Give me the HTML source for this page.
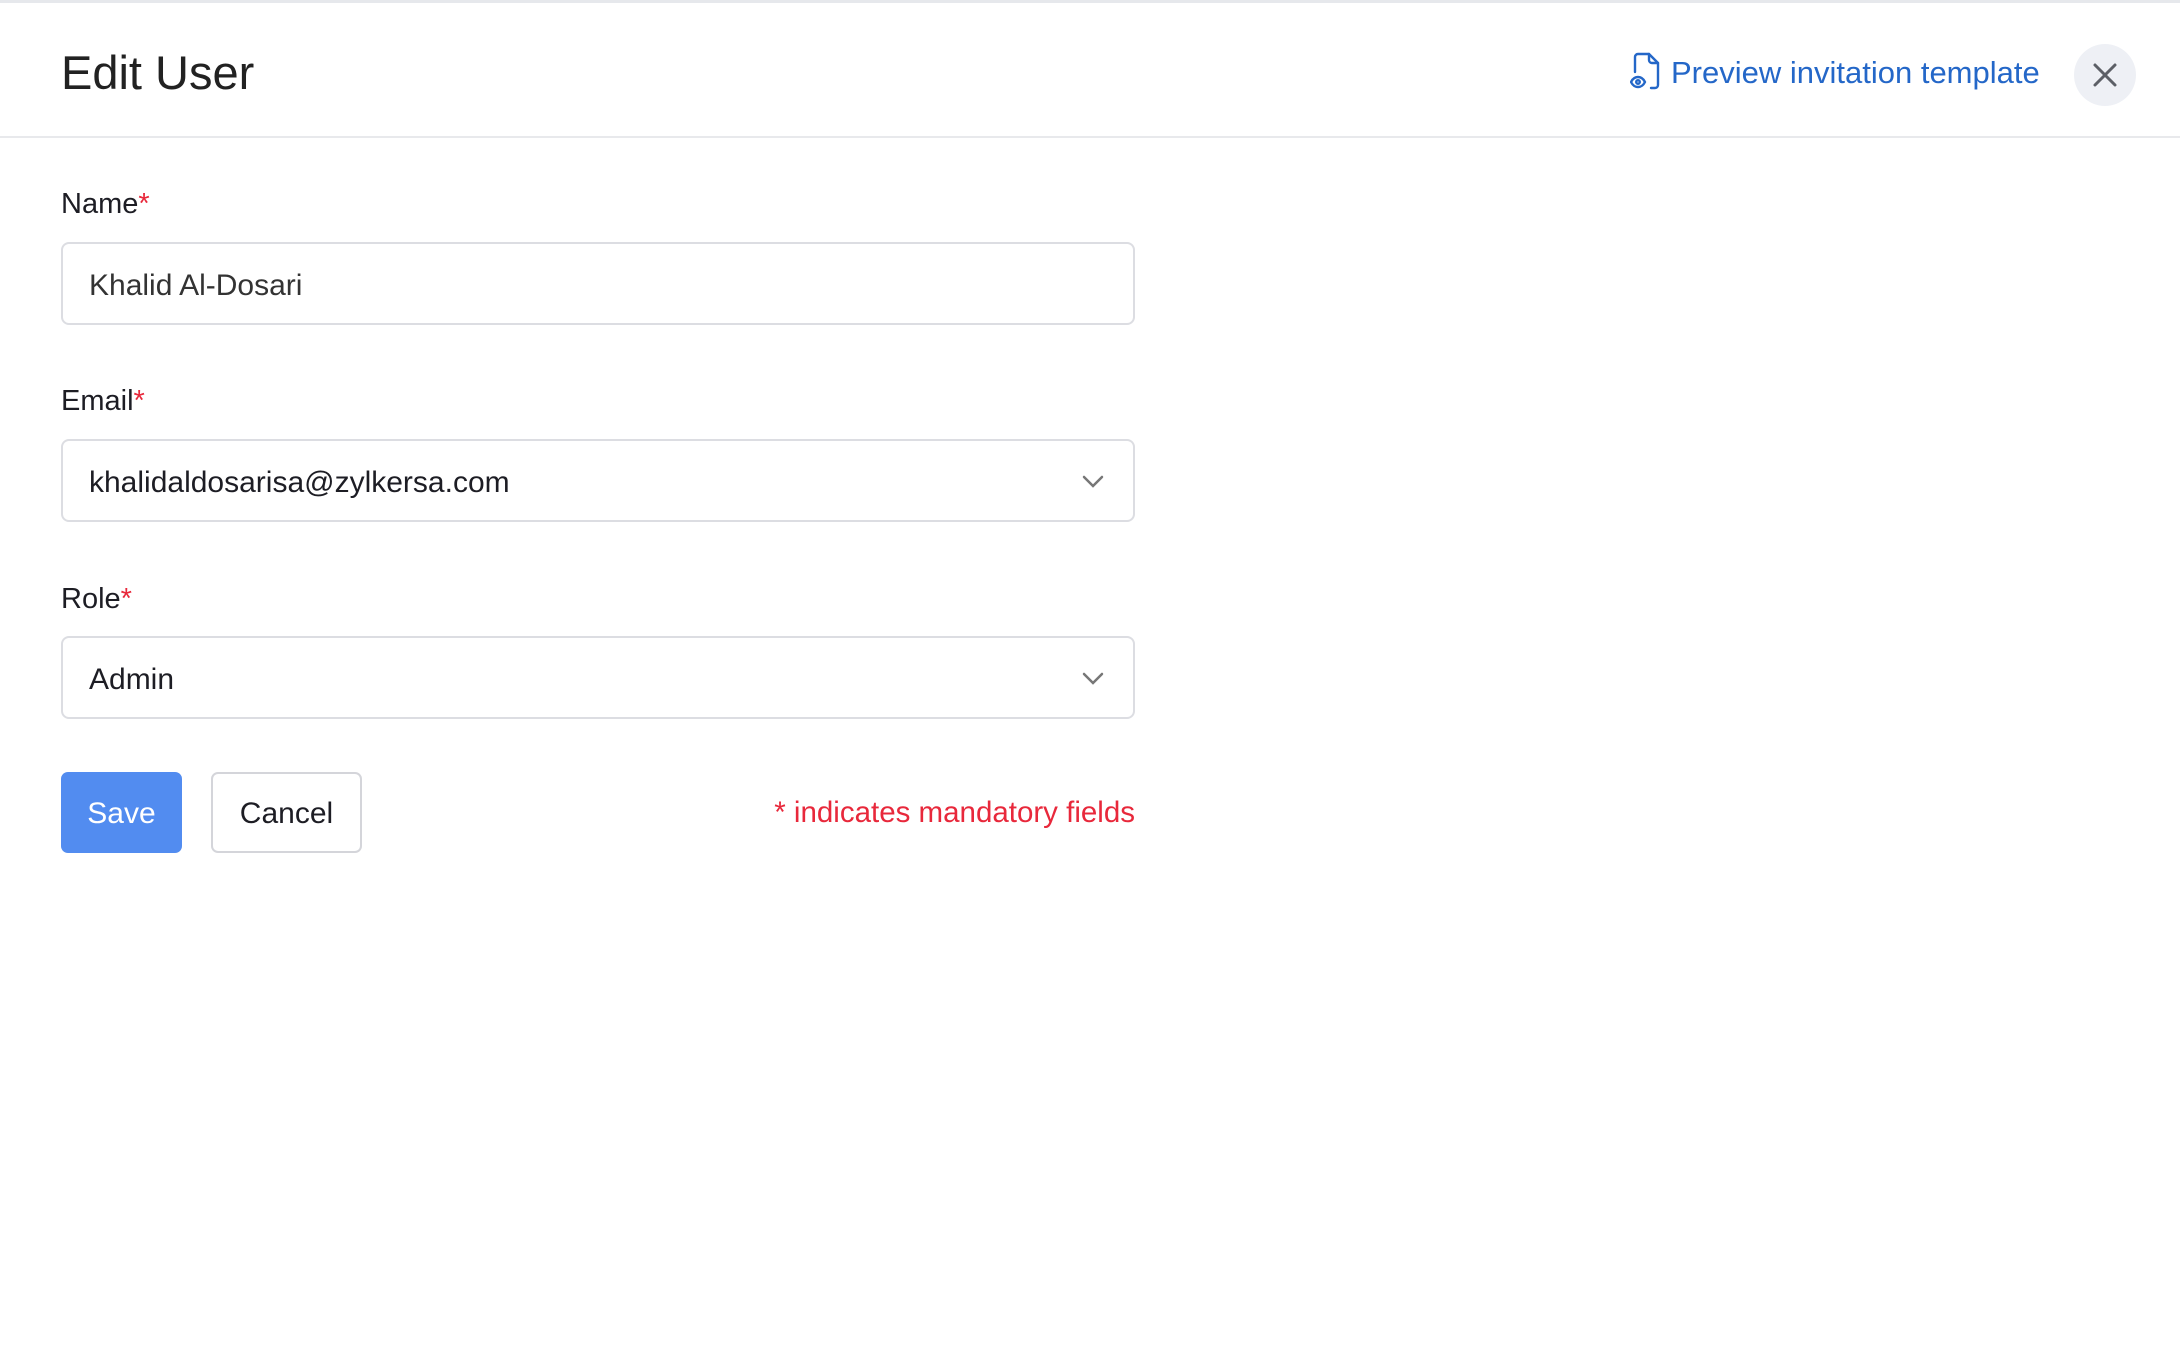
<!DOCTYPE html>
<html><head><meta charset="utf-8"><style>
*{box-sizing:border-box;margin:0;padding:0}
body{width:2180px;height:1370px;background:#fff;font-family:"Liberation Sans",sans-serif;position:relative;overflow:hidden;color:#1d1d24}
.top{position:absolute;left:0;top:0;width:2180px;height:3px;background:#e6e8ec}
.hdr{position:absolute;left:0;top:136px;width:2180px;height:2px;background:#e8e9ec}
h1{position:absolute;left:61px;top:45px;font-size:47px;font-weight:normal;color:#222}
.lbl{position:absolute;left:61px;font-size:29px;color:#1d1d24}
.lbl span{color:#e8283b}
.inp{position:absolute;left:61px;width:1074px;height:83px;border:2px solid #dcdde2;border-radius:8px;font-size:30px;padding-left:26px;line-height:83px;color:#1d1d24}
.chev{position:absolute;right:28px;top:32px}
.save{position:absolute;left:61px;top:772px;width:121px;height:81px;background:#528cf0;border-radius:7px;color:#fff;font-size:30px;text-align:center;line-height:84px}
.cancel{position:absolute;left:211px;top:772px;width:151px;height:81px;border:2px solid #d4d5da;border-radius:7px;font-size:30px;text-align:center;line-height:80px}
.mand{position:absolute;right:1045px;top:796px;font-size:29.5px;color:#e8283b}
.link{position:absolute;left:1671px;top:55px;font-size:31px;color:#2467c8}
.close{position:absolute;left:2074px;top:44px;width:62px;height:62px;border-radius:50%;background:#eef0f5}
</style></head><body>
<div class="top"></div>
<h1>Edit User</h1>
<svg style="position:absolute;left:1630px;top:52px" width="32" height="38" viewBox="0 0 32 38" fill="none" stroke="#2467c8" stroke-width="2.4" stroke-linecap="round" stroke-linejoin="round">
<path d="M5 20V5a3 3 0 0 1 3-3h11l9 9v22a3 3 0 0 1-3 3h-4"/><path d="M19 2v6a3 3 0 0 0 3 3h6"/>
<path d="M1 30c2-4 5-5 7-5s5 1 7 5c-2 4-5 5-7 5s-5-1-7-5z"/><circle cx="8" cy="30" r="1.8"/></svg>
<div class="link">Preview invitation template</div>
<div class="close"><svg width="62" height="62" viewBox="0 0 62 62" stroke="#5c5f66" stroke-width="3" stroke-linecap="round"><path d="M21 21l20 20M41 21L21 41"/></svg></div>
<div class="hdr"></div>
<div class="lbl" style="top:188px">Name<span>*</span></div>
<div class="inp" style="top:242px;color:#333">Khalid Al-Dosari</div>
<div class="lbl" style="top:385px">Email<span>*</span></div>
<div class="inp" style="top:439px">khalidaldosarisa@zylkersa.com<svg class="chev" width="24" height="16" viewBox="0 0 24 16" fill="none" stroke="#777" stroke-width="2.5" stroke-linecap="round"><path d="M3 4l9 9 9-9"/></svg></div>
<div class="lbl" style="top:583px">Role<span>*</span></div>
<div class="inp" style="top:636px">Admin<svg class="chev" width="24" height="16" viewBox="0 0 24 16" fill="none" stroke="#777" stroke-width="2.5" stroke-linecap="round"><path d="M3 4l9 9 9-9"/></svg></div>
<div class="save">Save</div>
<div class="cancel">Cancel</div>
<div class="mand">* indicates mandatory fields</div>
</body></html>
